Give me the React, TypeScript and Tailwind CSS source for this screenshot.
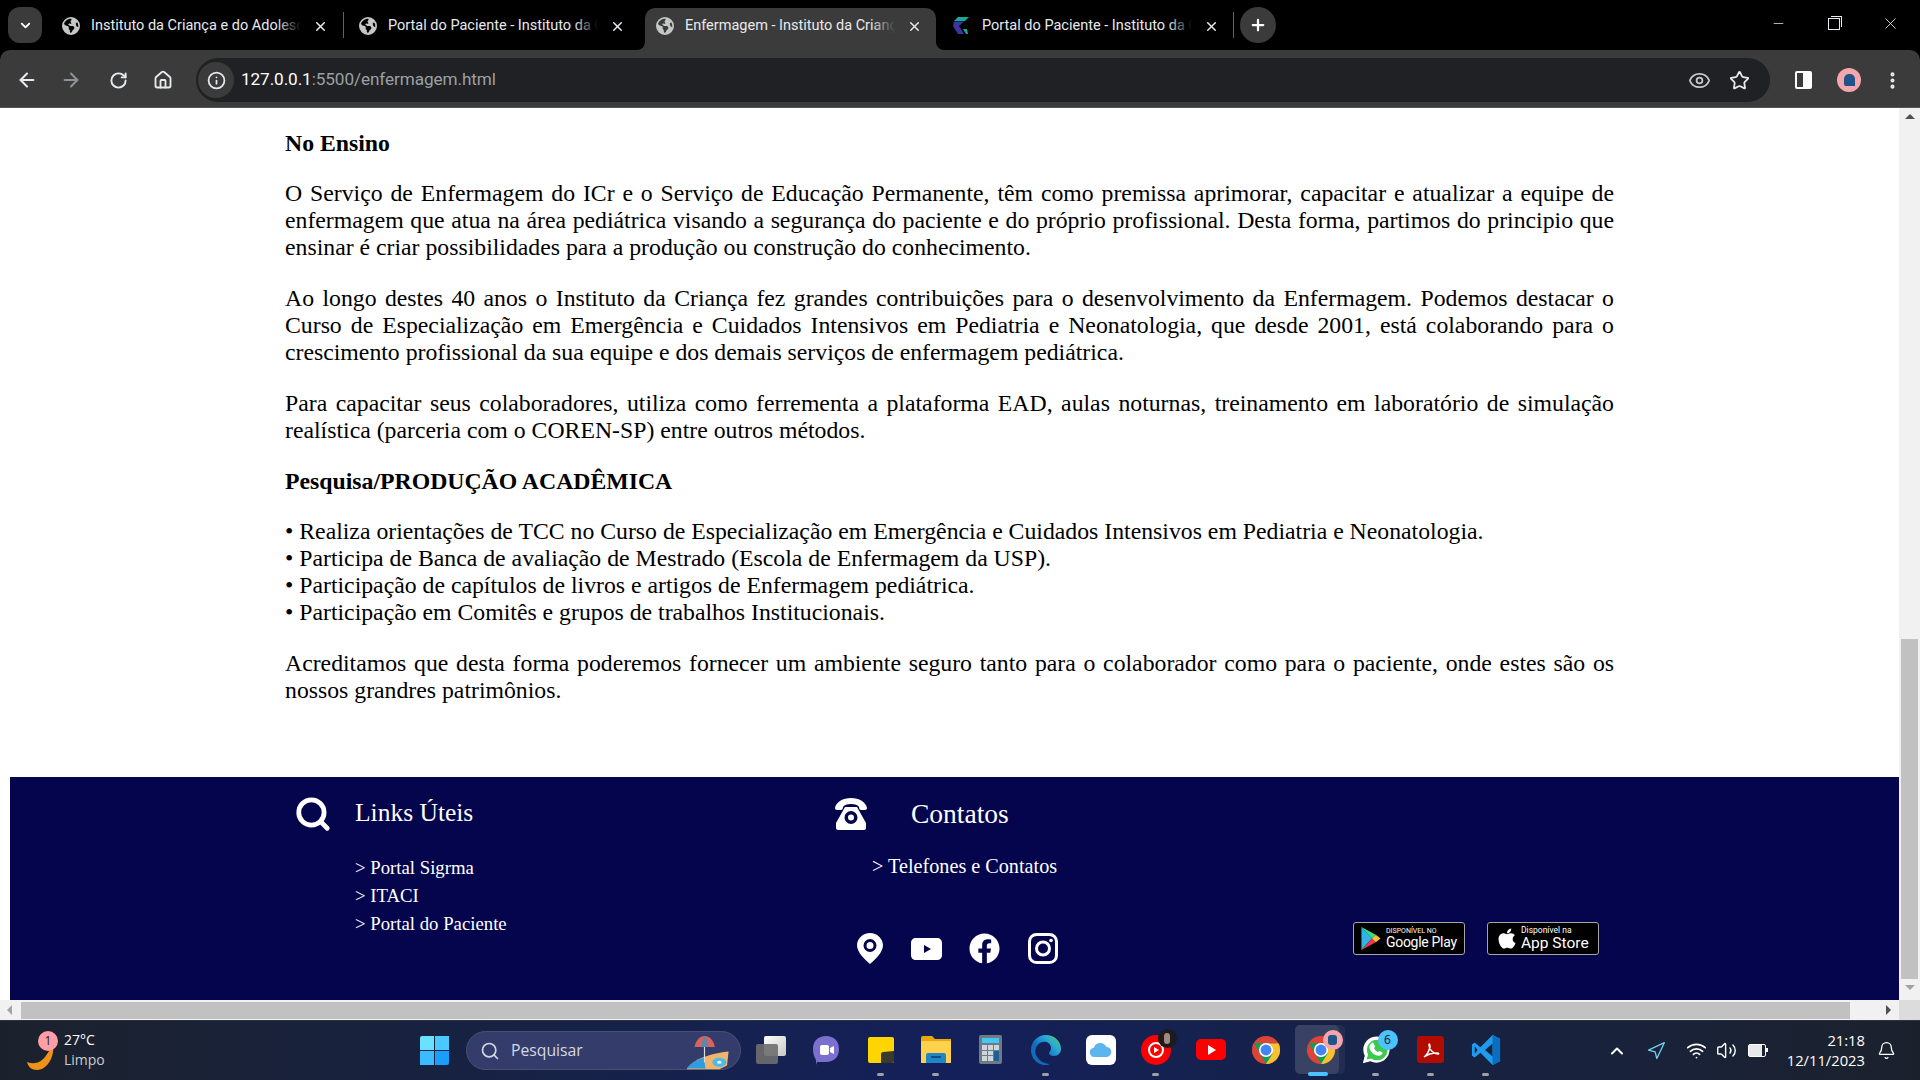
import {
  ArrowLeft,
  ArrowRight,
  Bell,
  ChevronDown,
  ChevronUp,
  Eye,
  Home,
  Info,
  Minus,
  MoreVertical,
  Navigation,
  Plus,
  RotateCw,
  Search,
  Star,
  Volume2,
  Wifi,
  X,
} from 'lucide-react';
import { FaApple, FaFacebook } from 'react-icons/fa';
import { FaEarthAmericas } from 'react-icons/fa6';

interface Tab {
  title: string;
  active?: boolean;
  logo?: boolean;
}

const tabs: Tab[] = [
  { title: 'Instituto da Criança e do Adolescente' },
  { title: 'Portal do Paciente - Instituto da Criança' },
  { title: 'Enfermagem - Instituto da Criança', active: true },
  { title: 'Portal do Paciente - Instituto da Criança', logo: true },
];

const serif = { fontFamily: '"Liberation Serif", serif' };

function TabItem({ tab }: { tab: Tab }) {
  return (
    <div
      className={`relative flex h-[42px] shrink-0 items-center rounded-t-[10px] pb-[6px] pr-[14px] ${
        tab.active ? 'ml-[6px] w-[291px] bg-[#3b3b3b] pl-[11px]' : 'w-[297px] bg-black pl-[17px]'
      }`}
    >
      {tab.active && (
        <>
          <div className="absolute -left-[8px] bottom-0 h-[8px] w-[8px] bg-[#3b3b3b]">
            <div className="h-full w-full rounded-br-[8px] bg-black" />
          </div>
          <div className="absolute -right-[8px] bottom-0 z-10 h-[8px] w-[8px] bg-[#3b3b3b]">
            <div className="h-full w-full rounded-bl-[8px] bg-black" />
          </div>
        </>
      )}
      {tab.logo ? (
        <svg viewBox="0 0 18 18" className="h-[18px] w-[18px] shrink-0">
          <path d="M5 0H16L12 4H1z" fill="#19a79a" />
          <path d="M1 4.500H11L6 9l5 8H5L0 9z" fill="#3b35a0" />
          <path d="M10 12l4 0 1 5h-2z" fill="#19a79a" />
        </svg>
      ) : (
        <FaEarthAmericas className="h-[18px] w-[18px] shrink-0 text-[#c4c7c5]" />
      )}
      <div className="relative ml-[11px] h-[20px] min-w-0 flex-1 overflow-hidden whitespace-nowrap text-[14.5px] leading-[20px] text-[#e8eaed]">
        {tab.title}
        <div className={`absolute inset-y-0 right-0 w-[24px] bg-gradient-to-r from-transparent ${tab.active ? 'to-[#3b3b3b]' : 'to-black'}`} />
      </div>
      <X className="ml-[12px] h-[15px] w-[15px] shrink-0 text-[#e8eaed]" strokeWidth={2.4} />
    </div>
  );
}

function TabStrip() {
  return (
    <div className="flex h-[50px] shrink-0 items-end bg-black">
      <div className="mb-[7px] ml-[8px] mr-[3px] flex h-[36px] w-[34px] items-center justify-center rounded-[12px] bg-[#3b3b3b]">
        <ChevronDown className="h-[15px] w-[15px] text-white" strokeWidth={3} />
      </div>
      <TabItem tab={tabs[0]} />
      <div className="relative z-10 mb-[12px] ml-[1px] -mr-[2px] h-[26px] w-px bg-[#5f6368]" />
      <TabItem tab={tabs[1]} />
      <TabItem tab={tabs[2]} />
      <TabItem tab={tabs[3]} />
      <div className="relative z-10 mb-[12px] h-[26px] w-px bg-[#5f6368]" />
      <div className="mb-[7px] ml-[6px] flex h-[36px] w-[36px] items-center justify-center rounded-full bg-[#3b3b3b]">
        <Plus className="h-[18px] w-[18px] text-white" strokeWidth={3} />
      </div>
      <div className="ml-auto flex h-full items-start pr-[2px] pt-[16px] text-[#e8eaed]">
        <div className="flex w-[56px] justify-center"><Minus className="h-[15px] w-[15px]" strokeWidth={1.2} /></div>
        <div className="flex w-[56px] justify-center">
          <div className="relative mt-[2px] h-[12px] w-[12px] border border-[#e8eaed]">
            <div className="absolute -right-[3px] -top-[3px] h-[11px] w-[11px] border-r border-t border-[#e8eaed]" />
          </div>
        </div>
        <div className="flex w-[56px] justify-center"><X className="h-[19px] w-[19px] -translate-y-[2px]" strokeWidth={1.1} /></div>
      </div>
    </div>
  );
}

function Toolbar() {
  return (
    <div className="flex h-[58px] shrink-0 items-start rounded-t-[10px] border-b border-[#555] bg-[#3b3b3b] pt-[8px]">
      <div className="flex h-[44px] w-[196px] shrink-0 items-center pl-[16px] text-[#e8eaed]">
        <ArrowLeft className="h-[22px] w-[22px]" strokeWidth={2.2} />
        <ArrowRight className="ml-[22px] h-[22px] w-[22px] text-[#8f9296]" strokeWidth={2.2} />
        <RotateCw className="ml-[27px] h-[19px] w-[19px]" strokeWidth={2.4} />
        <Home className="ml-[25px] h-[20px] w-[20px]" strokeWidth={2.2} />
      </div>
      <div className="flex h-[44px] w-[1574px] items-center rounded-full bg-[#202124] pl-[2px] pr-[20px]">
        <div className="flex h-[36px] w-[36px] items-center justify-center rounded-full bg-[#3b3b3b]">
          <Info className="h-[19px] w-[19px] text-[#e8eaed]" strokeWidth={2.2} />
        </div>
        <div className="ml-[7px] text-[17.2px] tracking-[-0.1px] text-[#9aa0a6]">
          <span className="text-white">127.0.0.1</span>:5500/enfermagem.html
        </div>
        <Eye className="ml-auto h-[23px] w-[23px] text-[#c7c9cc]" strokeWidth={1.8} />
        <Star className="ml-[18px] h-[21px] w-[21px] text-[#e8eaed]" strokeWidth={2} />
      </div>
      <div className="flex h-[44px] flex-1 items-center pl-[25px]">
        <div className="flex h-[18px] w-[17px] justify-end rounded-[2px] border-2 border-white">
          <div className="h-full w-[7px] bg-white" />
        </div>
        <div className="ml-[25px] flex h-[24px] w-[24px] items-center justify-center rounded-full bg-[#f4a6ad]">
          <div className="h-[12px] w-[11px] rounded-t-[5px] rounded-bl-[2px] bg-[#1f5488]" />
        </div>
        <MoreVertical className="ml-[21px] h-[21px] w-[21px] text-[#e8eaed]" strokeWidth={2.6} />
      </div>
    </div>
  );
}

function Article() {
  return (
    <article className="px-[285px] pt-[22px] text-justify text-[23.75px] leading-[27px] text-black">
      <h3 className="font-bold">No Ensino</h3>
      <p className="mt-[23px]">
        O Serviço de Enfermagem do ICr e o Serviço de Educação Permanente, têm como premissa aprimorar, capacitar e atualizar a equipe de enfermagem que atua na área pediátrica visando a segurança do paciente e do próprio profissional. Desta forma, partimos do principio que ensinar é criar possibilidades para a produção ou construção do conhecimento.
      </p>
      <p className="mt-[24px]">
        Ao longo destes 40 anos o Instituto da Criança fez grandes contribuições para o desenvolvimento da Enfermagem. Podemos destacar o Curso de Especialização em Emergência e Cuidados Intensivos em Pediatria e Neonatologia, que desde 2001, está colaborando para o crescimento profissional da sua equipe e dos demais serviços de enfermagem pediátrica.
      </p>
      <p className="mt-[24px]">
        Para capacitar seus colaboradores, utiliza como ferrementa a plataforma EAD, aulas noturnas, treinamento em laboratório de simulação realística (parceria com o COREN-SP) entre outros métodos.
      </p>
      <h3 className="mt-[24px] font-bold">Pesquisa/PRODUÇÃO ACADÊMICA</h3>
      <ul className="mt-[23px]">
        <li>• Realiza orientações de TCC no Curso de Especialização em Emergência e Cuidados Intensivos em Pediatria e Neonatologia.</li>
        <li>• Participa de Banca de avaliação de Mestrado (Escola de Enfermagem da USP).</li>
        <li>• Participação de capítulos de livros e artigos de Enfermagem pediátrica.</li>
        <li>• Participação em Comitês e grupos de trabalhos Institucionais.</li>
      </ul>
      <p className="mt-[24px]">
        Acreditamos que desta forma poderemos fornecer um ambiente seguro tanto para o colaborador como para o paciente, onde estes são os nossos grandres patrimônios.
      </p>
    </article>
  );
}

function PhoneIcon() {
  return (
    <svg viewBox="0 0 34 32" className="h-[32px] w-[34px]" fill="white">
      <path d="M1 10C2 4 9 0 17 0s15 4 16 10c0 1-1 2-2 2h-4c-1 0-2-1-2-3-1-2-4-3-8-3S10 7 9 9c0 2-1 3-2 3H3c-1 0-2-1-2-2z" />
      <path fillRule="evenodd" d="M11 9h12l9 16v5c0 1-1 2-2 2H4c-1 0-2-1-2-2v-5zM17 13a6.500 6.500 0 100 13 6.500 6.500 0 000-13zm0 3.500a3 3 0 110 6 3 3 0 010-6z" />
    </svg>
  );
}

function GoogleBadge() {
  return (
    <div className="flex h-[33px] w-[112px] items-center rounded-[3px] border border-[#a6a6a6] bg-black pl-[7px] text-white">
      <svg viewBox="0 0 20 24" className="h-[23px] w-[20px] shrink-0">
        <path d="M0 0l11 12L0 24z" fill="#2fb4e8" />
        <path d="M0 0l15 8-4 4z" fill="#3ddc84" />
        <path d="M0 24l15-8-4-4z" fill="#f0384a" />
        <path d="M15 8l5 4-5 4-4-4z" fill="#fbc02d" />
      </svg>
      <div className="ml-[5px] flex flex-col" style={{ fontFamily: 'Roboto, sans-serif' }}>
        <span className="text-[7px] leading-[8px]">DISPONÍVEL NO</span>
        <span className="text-[14px] leading-[15px] tracking-[-0.3px]">Google Play</span>
      </div>
    </div>
  );
}

function AppleBadge() {
  return (
    <div className="flex h-[33px] w-[112px] items-center rounded-[3px] border border-[#a6a6a6] bg-black pl-[9px] text-white">
      <FaApple className="h-[23px] w-[20px] shrink-0" />
      <div className="ml-[4px] flex flex-col" style={{ fontFamily: 'Roboto, sans-serif' }}>
        <span className="text-[8.500px] leading-[9px]">Disponível na</span>
        <span className="text-[15.500px] leading-[16px]">App Store</span>
      </div>
    </div>
  );
}

function SocialIcons() {
  return (
    <div className="ml-[23px] mt-[53px] flex items-center">
      <svg viewBox="0 0 26 31" className="h-[31px] w-[26px]">
        <path fillRule="evenodd" fill="white" d="M13 0c7 0 13 5.500 13 12.500C26 19 18 27 13 31 8 27 0 19 0 12.500 0 5.500 6 0 13 0zm0 6a6.500 6.500 0 100 13 6.500 6.500 0 000-13zm0 3a3.500 3.500 0 110 7 3.500 3.500 0 010-7z" />
      </svg>
      <svg viewBox="0 0 31 22" className="ml-[28px] h-[22px] w-[31px]">
        <path fillRule="evenodd" fill="white" d="M5 0h21c3 0 5 2 5 5v12c0 3-2 5-5 5H5c-3 0-5-2-5-5V5c0-3 2-5 5-5zm8 7v8l7-4z" />
      </svg>
      <FaFacebook className="ml-[27px] h-[31px] w-[31px]" />
      <svg viewBox="0 0 30 31" className="ml-[28px] h-[31px] w-[30px]" fill="none" stroke="white" strokeWidth="3">
        <rect x="1.500" y="1.500" width="27" height="28" rx="7" />
        <circle cx="15" cy="15.500" r="6.500" />
        <circle cx="23" cy="7.500" r="1.800" fill="white" stroke="none" />
      </svg>
    </div>
  );
}

function PageFooter() {
  return (
    <footer className="ml-[10px] flex h-[223px] shrink-0 bg-[#05054e] text-white">
      <div className="w-[345px] pl-[287px]">
        <Search className="mt-[18px] h-[38px] w-[38px] -translate-x-[3px]" strokeWidth={3} />
      </div>
      <div className="w-[479px]">
        <h4 className="mt-[20px] text-[25.5px] leading-[32px]">Links Úteis</h4>
        <ul className="mt-[25px] text-[18.75px] leading-[28px]">
          <li>&gt; Portal Sigrma</li>
          <li>&gt; ITACI</li>
          <li>&gt; Portal do Paciente</li>
        </ul>
      </div>
      <div className="w-[519px]">
        <div className="mt-[20px] flex items-center">
          <PhoneIcon />
          <h4 className="ml-[43px] text-[27.5px] leading-[34px]">Contatos</h4>
        </div>
        <p className="ml-[38px] mt-[21px] text-[20.2px] leading-[28px]">&gt; Telefones e Contatos</p>
        <SocialIcons />
      </div>
      <div className="flex gap-[22px] pt-[145px]">
        <GoogleBadge />
        <AppleBadge />
      </div>
    </footer>
  );
}

function Scrollbars() {
  return (
    <div className="flex w-[21px] shrink-0 flex-col items-center bg-[#f1f1f1]">
      <ChevronTriangle up />
      <div className="mt-[514px] h-[340px] w-[17px] bg-[#c1c1c1]" />
      <ChevronTriangle />
      <div className="mt-auto h-[20px] w-full bg-[#dcdcdc]" />
    </div>
  );
}

function ChevronTriangle({ up }: { up?: boolean }) {
  return (
    <div className="flex h-[17px] w-full shrink-0 items-center justify-center">
      <div
        className={`h-0 w-0 border-x-[5px] border-x-transparent ${
          up ? 'border-b-[5px] border-b-[#505050]' : 'border-t-[5px] border-t-[#a3a3a3]'
        }`}
      />
    </div>
  );
}

function HorizontalBar() {
  return (
    <div className="flex h-[20px] shrink-0 items-center bg-[#f1f1f1]">
      <div className="ml-[7px] h-0 w-0 border-y-[5px] border-r-[5px] border-y-transparent border-r-[#a3a3a3]" />
      <div className="ml-[9px] h-[17px] w-[1829px] bg-[#c1c1c1]" />
      <div className="ml-[36px] h-0 w-0 border-y-[5px] border-l-[5px] border-y-transparent border-l-[#505050]" />
    </div>
  );
}

function TaskIcon({ children, dot, active }: { children: React.ReactNode; dot?: boolean; active?: boolean }) {
  return (
    <div className="relative flex h-[52px] w-[55px] shrink-0 items-center justify-center">
      {active && (
        <>
          <div className="absolute left-[2px] top-[1px] h-[49px] w-[50px] rounded-[5px] bg-white/5" />
          <div className="absolute left-[2px] top-[1px] h-[49px] w-[44px] rounded-[5px] bg-white/10" />
        </>
      )}
      <div className="relative">{children}</div>
      {dot && <div className="absolute bottom-0 h-[3px] w-[7px] rounded-full bg-[#9ca0a8]" />}
      {active && <div className="absolute bottom-0 left-[15px] h-[4px] w-[20px] rounded-full bg-[#4cc2ff]" />}
    </div>
  );
}

function ChromeLogo() {
  return (
    <svg viewBox="0 0 32 32" className="h-[30px] w-[30px]">
      <circle cx="16" cy="16" r="15" fill="#db4437" />
      <path d="M3 8.500 10 20l6 11c8 0 15-7 15-15 0-2.500-.6-4.700-1.600-6.800L16 9z" fill="#0f9d58" />
      <path d="M16 9h13.400C31 12 31 16 31 16c0 8.300-6.700 15-15 15l7-11z" fill="#fbc02d" />
      <circle cx="16" cy="16" r="7.500" fill="white" />
      <circle cx="16" cy="16" r="5.800" fill="#4285f4" />
    </svg>
  );
}

function Tray() {
  return (
    <div className="ml-auto flex items-center pr-[24px]">
      <ChevronUp className="h-[20px] w-[20px]" strokeWidth={2.4} />
      <Navigation className="ml-[19px] h-[20px] w-[20px] text-[#6fd0ef]" strokeWidth={1.6} />
      <Wifi className="ml-[20px] h-[21px] w-[21px]" strokeWidth={2} />
      <Volume2 className="ml-[9px] h-[21px] w-[21px]" strokeWidth={1.6} />
      <div className="relative ml-[11px] h-[13px] w-[18px] rounded-[2px] border-[1.500px] border-white">
        <div className="absolute inset-y-0 left-0 w-[13px] bg-white/90" />
        <div className="absolute -right-[3px] top-[3px] h-[4px] w-[2px] bg-white" />
      </div>
      <div className="ml-[21px] -translate-y-[1px] text-right text-[14.75px] leading-[20px]">
        <div>21:18</div>
        <div>12/11/2023</div>
      </div>
      <Bell className="ml-[12px] h-[19px] w-[19px]" strokeWidth={1.6} />
    </div>
  );
}

function Taskbar() {
  return (
    <div className="flex h-[60px] shrink-0 items-center border-t border-[#2c3240] bg-gradient-to-r from-[#1b212c] via-[#14205a] to-[#1b212c] text-white" style={{ fontFamily: '"Open Sans", sans-serif' }}>
      <div className="relative ml-[26px] h-[40px] w-[38px] shrink-0">
        <svg viewBox="0 0 27 26" className="absolute bottom-[1px] left-[1px] h-[26px] w-[27px]">
          <path d="M26 0c2 13-6 26-16 26C5 26 1 23 0 18c8 3 14 0 18-5 3-4 6-9 8-13z" fill="#f0921a" />
        </svg>
        <div className="absolute left-[12px] top-0 flex h-[20px] w-[20px] items-center justify-center rounded-full bg-[#ff9ea5] text-[12px] text-[#222]">1</div>
      </div>
      <div className="w-[60px] -translate-y-[1px] text-[14px] leading-[20px]">
        <div>27°C</div>
        <div className="text-[#c9ccd2]">Limpo</div>
      </div>
      <div className="ml-[296px] grid h-[29px] w-[29px] grid-cols-2 gap-[1px]">
        <div className="rounded-tl-[2px] bg-[#6ce0ff]" />
        <div className="bg-[#4ac8ff]" />
        <div className="bg-[#3cbcff]" />
        <div className="rounded-br-[2px] bg-[#1b9dfb]" />
      </div>
      <div className="relative ml-[17px] flex h-[39px] w-[275px] shrink-0 items-center rounded-full border border-[#4a5170] bg-[#343c6c] pl-[13px] text-[15.75px] text-[#d5d8e0]">
        <Search className="h-[20px] w-[20px]" strokeWidth={2} />
        <span className="ml-[11px]">Pesquisar</span>
        <svg viewBox="0 0 60 48" className="absolute right-[3px] top-[1px] h-[37px] w-[60px]">
          <path d="M4 46C12 36 26 28 58 24l-2 18-10 5H4z" fill="#f0b56b" />
          <path d="M4 46c6-8 14-12 22-14l2 14z" fill="#2f9be0" />
          <ellipse cx="46" cy="38" rx="9" ry="6" fill="#4dbbe8" />
          <ellipse cx="46" cy="38" rx="3" ry="2" fill="#e9f5fb" />
          <rect x="26" y="12" width="1.500" height="26" fill="#ddd" />
          <path d="M14 18C15 10 21 4 27 4s12 6 13 14z" fill="#d9625a" />
          <path d="M23 18c0-6 2-12 4-14 2 2 4 8 4 14z" fill="#5a86b0" />
        </svg>
      </div>
      <div className="mb-[2px] ml-[2px] flex items-center">
        <TaskIcon>
          <div className="relative h-[28px] w-[30px]">
            <div className="absolute right-0 top-0 h-[20px] w-[22px] rounded-[2px] bg-gradient-to-br from-white to-[#c7c7c7]" />
            <div className="absolute bottom-0 left-0 h-[20px] w-[22px] rounded-[2px] bg-[#6e6e6e]/90" />
          </div>
        </TaskIcon>
        <TaskIcon>
          <svg viewBox="0 0 28 30" className="h-[30px] w-[28px]">
            <path d="M14 1c8 0 13 5 13 13s-5 13-13 13H5l-1 3v-5C2 22 1 18 1 14 1 6 6 1 14 1z" fill="#7b6fcf" />
            <rect x="8" y="10" width="9" height="10" rx="2" fill="white" />
            <path d="M18 13l4-2v8l-4-2z" fill="white" />
          </svg>
        </TaskIcon>
        <TaskIcon dot>
          <svg viewBox="0 0 26 26" className="h-[26px] w-[26px]">
            <rect width="26" height="26" rx="2" fill="#ffd500" />
            <path d="M13 26V17c0-1 1-2 2-2l11-1v10a2 2 0 01-2 2z" fill="#3a3a2a" />
          </svg>
        </TaskIcon>
        <TaskIcon dot>
          <svg viewBox="0 0 30 27" className="h-[27px] w-[30px]">
            <path d="M0 2a2 2 0 012-2h9l3 3h16v24H0z" fill="#e8a90e" />
            <rect y="5" width="30" height="22" rx="1" fill="#ffd24d" />
            <path d="M5 19a2 2 0 012-2h16a2 2 0 012 2v8H5z" fill="#1f86c9" />
            <rect x="10" y="20" width="10" height="2" fill="#0b4f86" />
          </svg>
        </TaskIcon>
        <TaskIcon>
          <svg viewBox="0 0 23 29" className="h-[29px] w-[23px]">
            <rect width="23" height="29" rx="2" fill="#6f7a85" />
            <rect x="3" y="3" width="17" height="5" fill="#45c8ef" />
            <g fill="#cdd5dc">
              <rect x="3" y="10" width="5" height="5" /><rect x="9" y="10" width="5" height="5" /><rect x="15" y="10" width="5" height="5" />
              <rect x="3" y="16" width="5" height="4" /><rect x="9" y="16" width="5" height="4" />
              <rect x="3" y="21" width="5" height="5" /><rect x="9" y="21" width="5" height="5" />
            </g>
            <rect x="15" y="16" width="5" height="10" fill="#1d5f96" />
          </svg>
        </TaskIcon>
        <TaskIcon dot>
          <svg viewBox="0 0 30 30" className="h-[30px] w-[30px]">
            <defs>
              <linearGradient id="edge" x1="0" y1="1" x2="1" y2="0">
                <stop offset="0.4" stopColor="#0f6cbd" />
                <stop offset="0.7" stopColor="#2aa7d8" />
                <stop offset="1" stopColor="#5fd24f" />
              </linearGradient>
            </defs>
            <path d="M15 0c8 0 15 6 15 14 0 4-3 7-7 7-3 0-5-1-5-3 0-1 2-2 2-5 0-4-4-7-8-6C6 8 3 14 5 20c2 5 8 9 14 9-2 1-3 1-5 1C6 30 0 23 0 15 0 7 6 0 15 0z" fill="url(#edge)" />
          </svg>
        </TaskIcon>
        <TaskIcon>
          <div className="flex h-[30px] w-[30px] items-center justify-center rounded-[6px] bg-white">
            <svg viewBox="0 0 24 16" className="h-[15px] w-[23px]">
              <path d="M6 16a5 5 0 01-1-10 7 7 0 0113-1 5.500 5.500 0 010 11z" fill="#5db5f0" />
            </svg>
          </div>
        </TaskIcon>
        <TaskIcon dot>
          <div className="relative flex h-[30px] w-[30px] items-center justify-center rounded-full bg-[#f00]">
            <div className="flex h-[16px] w-[16px] items-center justify-center rounded-full border-2 border-white">
              <div className="ml-[1px] h-0 w-0 border-y-[3px] border-l-[5px] border-y-transparent border-l-white" />
            </div>
            <div className="absolute -right-[6px] -top-[6px] h-[19px] w-[19px] rounded-full bg-[#1c1c1c]">
              <div className="ml-[6px] mt-[4px] h-[11px] w-[6px] rounded-full bg-[#a08a80]" />
            </div>
          </div>
        </TaskIcon>
        <TaskIcon>
          <div className="flex h-[21px] w-[30px] items-center justify-center rounded-[5px] bg-[#f00]">
            <div className="ml-[2px] h-0 w-0 border-y-[5px] border-l-[8px] border-y-transparent border-l-white" />
          </div>
        </TaskIcon>
        <TaskIcon><ChromeLogo /></TaskIcon>
        <TaskIcon active>
          <ChromeLogo />
          <div className="absolute -right-[7px] -top-[5px] flex h-[20px] w-[20px] items-center justify-center rounded-full bg-[#f4a6ad]">
            <div className="h-[10px] w-[9px] rounded-[3px] bg-[#1f5488]" />
          </div>
        </TaskIcon>
        <TaskIcon dot>
          <svg viewBox="0 0 32 32" className="h-[30px] w-[30px]">
            <path d="M2 30l2-8A14 14 0 1110 28z" fill="white" />
            <path d="M6 26l1.500-5A11 11 0 1111 25z" fill="#3dc94f" />
            <path d="M11 9c1-1 2-1 3 1l1 2-1 2c1 2 2 3 4 4l2-1 3 2c0 2-2 3-4 3-5 0-10-5-10-9 0-2 1-3 2-4z" fill="white" />
          </svg>
          <div className="absolute -right-[7px] -top-[5px] flex h-[20px] w-[20px] items-center justify-center rounded-full bg-[#4cc2ff] text-[12px] text-[#111]">6</div>
        </TaskIcon>
        <TaskIcon dot>
          <div className="flex h-[27px] w-[27px] items-center justify-center rounded-[3px] bg-[#b30b00]">
            <svg viewBox="0 0 20 20" className="h-[20px] w-[20px]" fill="none" stroke="white" strokeWidth="1.500">
              <path d="M3 17c3-2 5-6 6-10 0-3-1-4-1-2 0 4 4 9 9 9 1 0 1-1-1-1-4 0-9 1-13 4z" />
            </svg>
          </div>
        </TaskIcon>
        <TaskIcon dot>
          <svg viewBox="0 0 30 32" className="h-[30px] w-[30px]">
            <path d="M22 0l8 4v24l-8 4-13-13-6 5-3-2v-12l3-2 6 5z" fill="#1f9cf0" />
            <path d="M22 9l-8 7 8 7z" fill="#14243f" />
            <path d="M3 12l3 4-3 4z" fill="#14243f" />
            <path d="M22 0l8 4v24l-8 4z" fill="#0a6fc2" />
          </svg>
        </TaskIcon>
      </div>
      <Tray />
    </div>
  );
}

export default function App() {
  return (
    <div className="flex h-screen w-screen flex-col overflow-hidden bg-black" style={{ fontFamily: 'Roboto, sans-serif' }}>
      <TabStrip />
      <Toolbar />
      <div className="flex min-h-0 flex-1">
        <div className="flex min-w-0 flex-1 flex-col bg-white">
          <div className="flex min-h-0 flex-1 flex-col justify-between overflow-hidden" style={serif}>
            <Article />
            <PageFooter />
          </div>
          <HorizontalBar />
        </div>
        <Scrollbars />
      </div>
      <Taskbar />
    </div>
  );
}
